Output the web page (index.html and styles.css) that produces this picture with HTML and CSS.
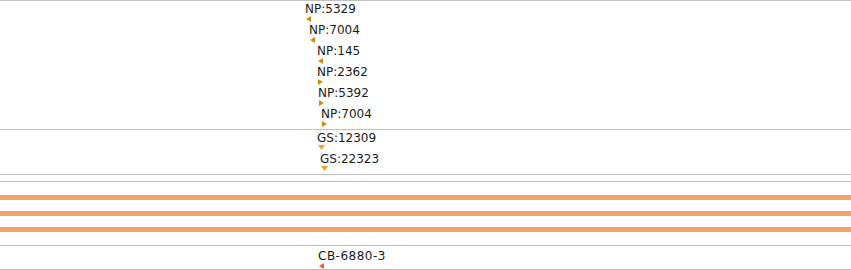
FILE: index.html
```html
<!DOCTYPE html>
<html lang="en">
  <head>
    <meta charset="UTF-8" />
    <link rel="stylesheet" href="styles.css">
  </head>
  <body>
    <div id="tracks">
      <!-- NP features -->
      <div class="track np-track">
        <div class="feature" style="margin-left: 305px"><span class="label">NP:5329</span><i class="tri tri-left np"></i></div>
        <div class="feature" style="margin-left: 309px"><span class="label">NP:7004</span><i class="tri tri-left np"></i></div>
        <div class="feature" style="margin-left: 317px"><span class="label">NP:145</span><i class="tri tri-left np"></i></div>
        <div class="feature" style="margin-left: 317px"><span class="label">NP:2362</span><i class="tri tri-right np"></i></div>
        <div class="feature" style="margin-left: 318px"><span class="label">NP:5392</span><i class="tri tri-right np"></i></div>
        <div class="feature" style="margin-left: 321px"><span class="label">NP:7004</span><i class="tri tri-right np"></i></div>
      </div>

      <!-- GS features -->
      <div class="track gs-track">
        <div class="feature" style="margin-left: 317px"><span class="label">GS:12309</span><i class="tri tri-down gs"></i></div>
        <div class="feature" style="margin-left: 320px"><span class="label">GS:22323</span><i class="tri tri-down gs"></i></div>
      </div>

      <div class="track empty-track"></div>

      <!-- coverage bars -->
      <div class="track bar-track">
        <div class="bar"></div>
        <div class="bar"></div>
        <div class="bar"></div>
      </div>

      <!-- CB features -->
      <div class="track cb-track">
        <div class="feature" style="margin-left: 318px"><span class="label cb-label">CB-6880-3</span><i class="tri tri-left cb"></i></div>
      </div>
    </div>
  </body>
</html>
```

FILE: styles.css
```css
body {
  margin: 0;
  background: #ffffff;
  font-family: "DejaVu Sans", sans-serif;
  font-size: 12px;
  color: #1a1a1a;
}

#tracks {
  border-top: 1px solid #c0c0c0;
}

.track {
  border-bottom: 1px solid #c0c0c0;
  box-sizing: border-box;
}

.np-track {
  padding-top: 2px;
}

.gs-track {
  padding-top: 2px;
}

.empty-track {
  height: 7px;
}

.bar-track {
  display: flex;
  flex-direction: column;
  gap: 11px;
  padding: 13px 0;
}

.bar {
  height: 5px;
  background-color: #f4a46e;
}

.cb-track {
  padding-top: 4px;
  height: 24px;
}

.feature {
  display: flex;
  flex-direction: column;
  align-items: flex-start;
  height: 21px;
}

.label {
  display: block;
  line-height: 12px;
  white-space: nowrap;
}

.cb-label {
  letter-spacing: 0.5px;
}

.tri {
  display: block;
  margin-top: 1px;
  margin-left: 1px;
}

.tri-left {
  width: 5px;
  height: 6px;
  clip-path: polygon(0 50%, 100% 0, 100% 100%);
}

.tri-right {
  width: 5px;
  height: 6px;
  clip-path: polygon(0 0, 100% 50%, 0 100%);
}

.tri-down {
  width: 7px;
  height: 5px;
  clip-path: polygon(0 0, 100% 0, 50% 100%);
}

.np {
  background-color: #d08c0c;
}

.gs {
  background-color: #f2a21c;
}

.cb {
  background-color: #ee5c38;
}
```
